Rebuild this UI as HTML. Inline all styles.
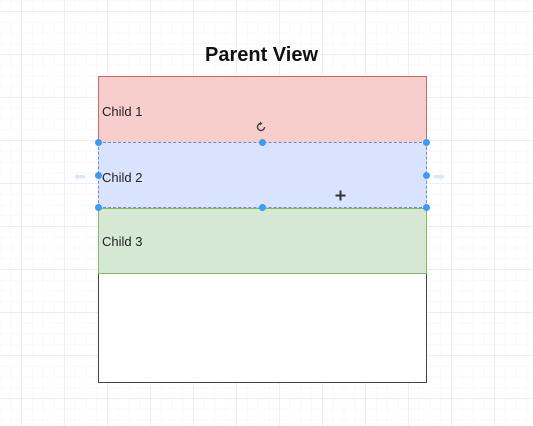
<!DOCTYPE html>
<html><head><style>
html,body{margin:0;padding:0;}
body{width:533px;height:426px;position:relative;overflow:hidden;font-family:"Liberation Sans",Arial,sans-serif;
background-color:#fff;
background-image:
linear-gradient(to right,#eeeef2 1px,transparent 1px),
linear-gradient(to bottom,#eeeef2 1px,transparent 1px),
linear-gradient(to right,#f8f8fa 1px,transparent 1px),
linear-gradient(to bottom,#f8f8fa 1px,transparent 1px);
background-size:43px 43px,43px 43px,10.75px 10.75px,10.75px 10.75px;
background-position:21px 11px,21px 11px,21px 11px,21px 11px;}
.b{position:absolute;left:98px;width:329px;box-sizing:border-box;}
.t{position:absolute;left:3px;font-size:13px;color:#222;}
.h{position:absolute;width:7px;height:7px;border-radius:50%;background:#3d9af2;}
</style></head><body>
<div style="position:absolute;left:205px;top:44px;font-weight:bold;font-size:20px;color:#111;white-space:nowrap">Parent View</div>
<div class="b" style="top:76px;height:307px;border:1.5px solid #444;background:#fff"></div>
<div class="b" style="top:76px;height:67px;background:#f8cecc;border:1px solid #c46b63;"><span class="t" style="top:27px">Child 1</span></div>
<div class="b" style="top:208px;height:66px;background:#d5e8d4;border:1px solid #86b86c;"><span class="t" style="top:25px">Child 3</span></div>
<div class="b" style="top:142px;height:66px;background:#dae3fd;border:1px dashed #6c8ebf;"><span class="t" style="top:27px">Child 2</span></div>
<div class="h" style="left:95px;top:139px"></div><div class="h" style="left:259px;top:139px"></div><div class="h" style="left:423px;top:139px"></div>
<div class="h" style="left:95px;top:172px"></div><div class="h" style="left:423px;top:172px"></div>
<div class="h" style="left:95px;top:204px"></div><div class="h" style="left:259px;top:204px"></div><div class="h" style="left:423px;top:204px"></div>
<div style="position:absolute;left:74px;top:168px;color:#d6e8fb;font-size:14px">⬅</div>
<div style="position:absolute;left:433px;top:168px;color:#d6e8fb;font-size:14px">➡</div>
<svg style="position:absolute;left:255px;top:121px" width="12" height="12" viewBox="0 0 12 12"><path d="M9.5 6A3.5 3.5 0 1 1 6 2.5" fill="none" stroke="#444" stroke-width="1.5"/><path d="M5 0.5L7.5 2.5L5 4.5Z" fill="#444"/></svg>
<svg style="position:absolute;left:335px;top:190px" width="11" height="11" viewBox="0 0 11 11"><path d="M5.5 0.5V10.5M0.5 5.5H10.5" stroke="#333" stroke-width="2"/></svg>
</body></html>
